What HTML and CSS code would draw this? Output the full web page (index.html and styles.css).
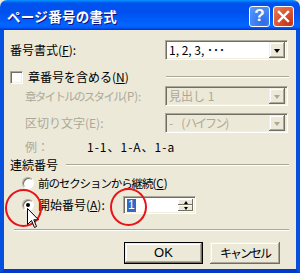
FILE: index.html
```html
<!DOCTYPE html>
<html lang="ja">
<head>
<meta charset="utf-8">
<title>ページ番号の書式</title>
<link rel="stylesheet" href="styles.css">
</head>
<body>
<div class="window">
  <div class="titlebar">
    <span class="title">ページ番号の書式</span>
    <div class="tb-buttons">
      <div class="tb help">?</div>
      <div class="tb close"><svg width="13" height="13" viewBox="0 0 13 13"><path d="M2 2 L11 11 M11 2 L2 11" stroke="#fff" stroke-width="2.4" stroke-linecap="square"/></svg></div>
    </div>
  </div>
  <div class="body">
    <div class="row r-format">
      <span class="label">番号書式(<u>F</u>):</span>
      <div class="combo"><span class="ctext">1, 2, 3, ･･･</span><span class="drop"><i class="arrow"></i></span></div>
    </div>
    <div class="row r-check">
      <span class="checkbox"></span>
      <span class="label">章番号を含める(<u>N</u>)</span>
      <span class="sep-line"></span>
    </div>
    <div class="row r-style indent disabled">
      <span class="label small"><span class="k15">章タイトルのスタイル</span>(P):</span>
      <div class="combo off"><span class="ctext">見出し 1</span><span class="drop"><i class="arrow"></i></span></div>
    </div>
    <div class="row r-sep indent disabled">
      <span class="label">区切り文字(E):</span>
      <div class="combo off"><span class="ctext">-&nbsp;&nbsp;&nbsp;(<span class="k2">ハイフン</span>)</span><span class="drop"><i class="arrow"></i></span></div>
    </div>
    <div class="row r-example indent">
      <span class="label ex-label">例：</span>
      <span class="ex-value">1-1、1-A、1-a</span>
    </div>
    <div class="row r-section">
      <span class="label">連続番号</span>
      <span class="sep-line"></span>
    </div>
    <div class="row r-radio1 radio-row">
      <span class="radio"></span>
      <span class="label small"><span class="k09">前のセクションから継続</span>(<u>C</u>)</span>
    </div>
    <div class="row r-radio2 radio-row">
      <span class="radio on"></span>
      <span class="label start-label">開始番号(<u>A</u>):</span>
      <div class="spin"><span class="stext"><span class="sel">1</span></span><span class="spin-btns"><span class="sb"><i class="up"></i></span><span class="sb"><i class="down"></i></span></span></div>
    </div>
    <div class="hr"></div>
    <div class="row r-buttons">
      <div class="btn default">OK</div>
      <div class="btn"><span class="k2">キャンセル</span></div>
    </div>
  </div>
  <div class="mark mark1"></div>
  <div class="mark mark2"></div>
  <svg class="cursor" width="13" height="21" viewBox="0 0 13 21"><path d="M0.5 0.5 L0.5 16.5 L4.5 12.5 L7.5 19.5 L9.5 18.5 L6.8 11.8 L11.5 11.8 Z" fill="#fff" stroke="#000" stroke-width="1"/></svg>
</div>
</body>
</html>
```

FILE: styles.css
```css
html, body {
  margin: 0;
  padding: 0;
  background: #ECE9D8;
}
.window {
  position: relative;
  width: 300px;
  height: 273px;
  overflow: hidden;
  font-family: "Noto Sans CJK JP", "Noto Sans", sans-serif;
  font-size: 12px;
  color: #000;
}
.titlebar {
  height: 30px;
  display: flex;
  align-items: center;
  justify-content: space-between;
  padding: 0 6px 0 7px;
  box-sizing: border-box;
  background: linear-gradient(#0997FF 0%, #0053EE 10%, #0050EE 40%, #0066FF 85%, #005BFF 92%, #003DD7 97%, #003DD7 100%);
  border-radius: 7px 7px 0 0;
}
.title {
  color: #fff;
  font-weight: bold;
  font-size: 13.5px;
  letter-spacing: 0.3px;
  text-shadow: 1px 1px #0F1089;
  line-height: 16px;
  margin-top: 1px;
}
.tb-buttons {
  display: flex;
  gap: 3px;
  margin-top: 2px;
}
.tb {
  width: 21px;
  height: 21px;
  box-sizing: border-box;
  border: 1px solid #fff;
  border-radius: 3px;
  display: flex;
  align-items: center;
  justify-content: center;
  color: #fff;
  font-family: "Liberation Sans", sans-serif;
  font-weight: bold;
  font-size: 17px;
}
.help {
  background: radial-gradient(circle at 70% 80%, #2F6BE8 0%, #3C7FF3 40%, #5A9BFB 100%);
}
.close {
  background: radial-gradient(circle at 80% 85%, #C73414 0%, #DA4E2D 45%, #E9845E 100%);
}
.body {
  height: 243px;
  box-sizing: border-box;
  border-left: 4px solid #0650E0;
  border-right: 4px solid #0650E0;
  border-bottom: 4px solid #0339C9;
  padding: 0 8px 0 6px;
  display: flex;
  flex-direction: column;
  background: #ECE9D8;
}
.row {
  display: flex;
  align-items: center;
  line-height: 16px;
}
.label { white-space: nowrap; }
.small { font-size: 11.5px; }
.k15 { letter-spacing: -1.7px; }
.k2 { letter-spacing: -2px; }
.k09 { letter-spacing: -1.1px; }
u { text-decoration: underline; text-underline-offset: 1px; }
.r-format { margin-top: 10px; height: 20px; justify-content: space-between; }
.combo {
  width: 123px;
  height: 20px;
  flex: none;
  box-sizing: border-box;
  border: 1px solid;
  border-color: #ACA899 #fff #fff #ACA899;
  box-shadow: inset 1px 1px #716F64, inset -1px -1px #F1EFE2;
  background: #fff;
  display: flex;
  align-items: center;
  padding: 2px;
}
.combo .ctext { flex: 1; padding-left: 1px; line-height: 16px; white-space: nowrap; }
.combo.off { background: #ECE9D8; color: #ACA899; }
.drop {
  width: 16px;
  height: 16px;
  box-sizing: border-box;
  background: #ECE9D8;
  box-shadow: inset -1px -1px #716F64, inset 1px 1px #F1EFE2, inset -2px -2px #ACA899, inset 2px 2px #fff;
  display: flex;
  align-items: center;
  justify-content: center;
}
.arrow {
  width: 0; height: 0;
  border-left: 3.5px solid transparent;
  border-right: 3.5px solid transparent;
  border-top: 4px solid #000;
  margin-top: 1px;
}
.combo.off .arrow { border-top-color: #ACA899; }
.r-check { margin-top: 10px; height: 14px; }
.checkbox {
  width: 13px;
  height: 13px;
  box-sizing: border-box;
  border: 1px solid;
  border-color: #ACA899 #fff #fff #ACA899;
  box-shadow: inset 1px 1px #716F64, inset -1px -1px #F1EFE2;
  background: #fff;
  margin-right: 5px;
}
.sep-line {
  flex: 1;
  height: 0;
  border-top: 1px solid #ACA899;
  border-bottom: 1px solid #fff;
  margin-left: 37px;
  margin-right: -1px;
}
.indent { padding-left: 15px; justify-content: space-between; }
.disabled .label { color: #ACA899; }
.r-style { margin-top: 2px; height: 20px; }
.r-sep { margin-top: 7px; height: 20px; }
.r-example { margin-top: 6px; height: 16px; justify-content: flex-start; }
.ex-label { color: #ACA899; width: 62px; }
.ex-value { letter-spacing: 1px; }
.r-section { margin-top: 2px; height: 16px; }
.r-section .sep-line { margin-left: 8px; }
.radio-row { padding-left: 12px; }
.radio {
  width: 12px;
  height: 12px;
  box-sizing: border-box;
  border-radius: 50%;
  background: #fff;
  border: 1px solid;
  border-color: #ACA899 #fff #fff #ACA899;
  box-shadow: inset 1px 1px #716F64;
  margin-right: 4px;
  position: relative;
}
.radio.on::after {
  content: "";
  position: absolute;
  left: 3px; top: 3px;
  width: 4px; height: 4px;
  border-radius: 50%;
  background: #000;
}
.r-radio1 { margin-top: 2px; height: 16px; }
.r-radio2 { margin-top: 5px; height: 18px; }
.start-label { width: 85px; }
.spin {
  width: 73px;
  height: 18px;
  box-sizing: border-box;
  border: 1px solid;
  border-color: #ACA899 #fff #fff #ACA899;
  box-shadow: inset 1px 1px #716F64, inset -1px -1px #F1EFE2;
  background: #fff;
  display: flex;
  padding: 2px;
}
.stext { flex: 1; display: flex; align-items: center; padding-left: 1px; }
.sel {
  background: #316AC5;
  color: #fff;
  line-height: 13px;
  padding: 0 1px;
  font-family: "Liberation Sans", sans-serif;
}
.spin-btns { display: flex; flex-direction: column; width: 15px; }
.sb {
  flex: 1;
  background: #ECE9D8;
  box-shadow: inset -1px -1px #716F64, inset 1px 1px #fff;
  display: flex;
  align-items: center;
  justify-content: center;
}
.up, .down { width: 0; height: 0; border-left: 2.5px solid transparent; border-right: 2.5px solid transparent; }
.up { border-bottom: 3px solid #000; }
.down { border-top: 3px solid #000; }
.hr {
  margin-top: 15px;
  height: 0;
  border-top: 1px solid #ACA899;
  border-bottom: 1px solid #fff;
  margin-left: 4px;
  margin-right: -1px;
}
.r-buttons { margin-top: 11px; height: 22px; padding-left: 114px; gap: 7px; }
.btn {
  height: 22px;
  box-sizing: border-box;
  background: #ECE9D8;
  box-shadow: inset -1px -1px #716F64, inset 1px 1px #F1EFE2, inset -2px -2px #ACA899, inset 2px 2px #fff;
  display: flex;
  align-items: center;
  justify-content: center;
  width: 70px;
}
.btn.default {
  width: 79px;
  border: 1px solid #000;
  font-family: "Liberation Sans", sans-serif;
  font-size: 13px;
}
.mark {
  position: absolute;
  width: 37px;
  height: 38px;
  box-sizing: border-box;
  border: 2px solid #E8141B;
  border-radius: 50%;
}
.mark1 { left: 5px; top: 189px; }
.mark2 { left: 110px; top: 188px; }
.cursor { position: absolute; left: 27px; top: 208px; }
```
